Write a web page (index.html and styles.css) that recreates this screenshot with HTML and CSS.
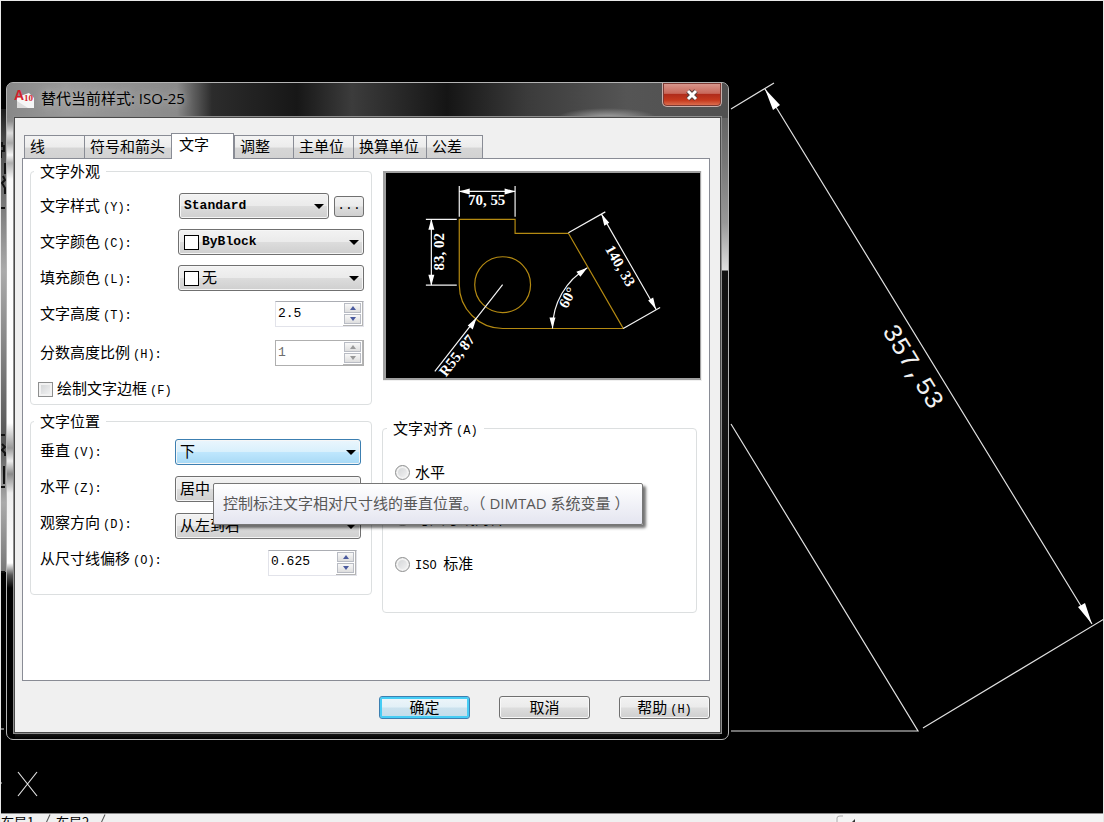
FILE: index.html
```html
<!DOCTYPE html>
<html lang="zh-CN">
<head>
<meta charset="utf-8">
<title>替代当前样式: ISO-25</title>
<link rel="stylesheet" href="styles.css">
</head>
<body>
<main class="desktop">
  <svg class="canvas" width="1104" height="822" viewBox="0 0 1104 822" aria-hidden="true">
    <defs>
      <linearGradient id="strip" x1="0" x2="0" y1="0" y2="1">
        <stop offset="0" stop-color="#1c1c1c"/><stop offset=".06" stop-color="#444"/>
        <stop offset=".15" stop-color="#666"/><stop offset=".35" stop-color="#aaa"/>
        <stop offset=".5" stop-color="#888"/><stop offset=".72" stop-color="#555"/>
        <stop offset=".85" stop-color="#aaa"/><stop offset="1" stop-color="#777"/>
      </linearGradient>
    </defs>
    <rect x="1" y="109" width="5" height="463" fill="url(#strip)"/>
    <path d="M2 142v4h2v5H1v7M5 163v11M3 176l2 4-3 3 3 5v6M1 208h4M1 435h4M2 444l3 3-3 3 3 3v3M4 466v18M1 487h4M1 572h4" fill="none" stroke="#111" stroke-width="2"/>
    <g fill="none" stroke="#e0e0e0" stroke-width="1.2">
      <path d="M731 109L774 83M765 89L1092 624M923 728L1104 619M731 424L918 731H731M0 729h4M18 772L37 796M37 772L18 796M1 783h1"/>
    </g>
    <path fill="#fff" d="M765 89l15 16-7 5zM1092 624l-14-17 7-4z"/>
    <text class="big-dim" x="912" y="367" text-anchor="middle" dominant-baseline="central" transform="rotate(58.6 912 367)">357,53</text>
  </svg>

  <nav class="layout-tabs" aria-label="布局">
    <a href="#l1">布局1</a><i></i><a href="#l2">布局2</a><i></i>
    <svg class="scroll-corner" width="268" height="9" viewBox="0 0 268 9"><path d="M0 0H268V9H0z" fill="#f4f4f4"/><path d="M2 9V4q0-2 3-2h3" fill="none" stroke="#aaa"/><path d="M16 9l4-4v4z" fill="#333"/></svg>
  </nav>

  <section class="dialog" role="dialog" aria-labelledby="title">
    <header class="titlebar">
      <svg class="app-icon" width="22" height="22" viewBox="0 0 22 22" aria-hidden="true">
        <path d="M3 9L15 5l5 5v10H3z" fill="#f6f6f6"/><path d="M3 20V13L14 20z" fill="#ddd"/>
        <text class="icon-a" x="0" y="12">A</text><text class="icon-n" x="10" y="13">10</text>
      </svg>
      <h1 id="title">替代当前样式: ISO-25</h1>
      <button class="close" aria-label="关闭"><svg width="14" height="12" viewBox="0 0 14 12"><path d="M3 2l8 8M11 2l-8 8" stroke="#55403e" stroke-width="5"/><path d="M3 2l8 8M11 2l-8 8" stroke="#fff" stroke-width="3"/></svg></button>
    </header>

    <div class="body">
      <div class="tabs" role="tablist">
        <button role="tab" class="tab tab-line">线</button>
        <button role="tab" class="tab tab-symbols">符号和箭头</button>
        <button role="tab" class="tab tab-text active" aria-selected="true">文字</button>
        <button role="tab" class="tab tab-fit">调整</button>
        <button role="tab" class="tab tab-primary">主单位</button>
        <button role="tab" class="tab tab-alt">换算单位</button>
        <button role="tab" class="tab tab-tol">公差</button>
      </div>

      <div class="panel" role="tabpanel">
        <div class="column">
          <fieldset class="group appearance">
            <legend>文字外观</legend>
            <div class="row"><label for="style">文字样式<span class="key">(Y):</span></label>
              <span class="pick pick-style"><select id="style" class="latin"><option>Standard</option></select></span>
              <button class="more">...</button></div>
            <div class="row"><label for="color">文字颜色<span class="key">(C):</span></label>
              <span class="pick swatch"><select id="color" class="latin"><option>ByBlock</option></select></span></div>
            <div class="row"><label for="fill">填充颜色<span class="key">(L):</span></label>
              <span class="pick swatch"><select id="fill"><option>无</option></select></span></div>
            <div class="row"><label for="height">文字高度<span class="key">(T):</span></label>
              <span class="spin"><input id="height" type="text" value="2.5"><span class="steps"><button class="up" aria-label="增加"></button><button class="down" aria-label="减少"></button></span></span></div>
            <div class="row row-tall"><label for="frac">分数高度比例<span class="key">(H):</span></label>
              <span class="spin off"><input id="frac" type="text" value="1" disabled><span class="steps"><button class="up" aria-label="增加" disabled></button><button class="down" aria-label="减少" disabled></button></span></span></div>
            <div class="row row-check"><input id="frame" type="checkbox"><label for="frame">绘制文字边框<span class="key">(F)</span></label></div>
          </fieldset>

          <fieldset class="group placement">
            <legend>文字位置</legend>
            <div class="labels">
              <label for="vert">垂直<span class="key">(V):</span></label>
              <label for="horiz">水平<span class="key">(Z):</span></label>
              <label for="view">观察方向<span class="key">(D):</span></label>
              <label for="offset">从尺寸线偏移<span class="key">(O):</span></label>
            </div>
            <div class="controls">
              <div><span class="pick hot"><select id="vert"><option>下</option></select></span></div>
              <div><span class="pick"><select id="horiz"><option>居中</option></select></span></div>
              <div><span class="pick"><select id="view"><option>从左到右</option></select></span></div>
              <div class="offset"><span class="spin"><input id="offset" type="text" value="0.625"><span class="steps"><button class="up" aria-label="增加"></button><button class="down" aria-label="减少"></button></span></span></div>
            </div>
          </fieldset>
        </div>

        <div class="column column-right">
          <div class="preview">
            <svg viewBox="386 174 315 206" role="img" aria-label="标注预览">
              <g fill="none" stroke="#b48a12" stroke-width="1.2">
                <path d="M459.500 286V220.500H515.500V234.500H569L624 330H503A44 44 0 0 1 459.500 286"/>
                <circle cx="503" cy="286" r="28"/>
              </g>
              <g fill="none" stroke="#f4f4f4" stroke-width="1.2">
                <path d="M459.500 187V218M515.500 187V218M459 192.500H516M426 220.500H457M426 286.500H457M431.500 220V286M569 234L606 213M624 330L661 309M602 215L657 311M503 286L435 373M553 330A71 71 0 0 1 588 269"/>
              </g>
              <path fill="#fff" d="M459 192.500l11-3v6zM516 192.500l-11-3v6zM431.500 220l-3 11h6zM431.500 287l-3-11h6zM602 215l3 12 5-3zM657 311l-8-9 5-3zM477 319l-9 8 5 4zM553 330l-3-11h6zM588 269l-11 4 4 5z"/>
              <g class="dims" text-anchor="middle" dominant-baseline="central">
                <text x="487" y="201">70, 55</text>
                <text x="439" y="253" transform="rotate(-90 439 253)">83, 02</text>
                <text x="621" y="267" transform="rotate(60 621 267)">140, 33</text>
                <text x="568" y="299" transform="rotate(-62 568 299)">60°</text>
                <text x="457" y="357" transform="rotate(-52 457 357)">R55, 87</text>
              </g>
            </svg>
          </div>

          <fieldset class="group align">
            <legend>文字对齐<span class="key">(A)</span></legend>
            <label><input type="radio" name="align">水平</label>
            <label><input type="radio" name="align">与尺寸线对齐</label>
            <label><input type="radio" name="align"><span><span class="key">ISO</span>&nbsp; 标准</span></label>
          </fieldset>
        </div>
      </div>

      <footer class="actions">
        <button class="default">确定</button>
        <button>取消</button>
        <button>帮助<span class="key">(H)</span></button>
      </footer>
    </div>

    <div class="tooltip" role="tooltip">控制标注文字相对尺寸线的垂直位置。（ DIMTAD 系统变量 ）</div>
  </section>
</main>
</body>
</html>
```

FILE: styles.css
```css
* { box-sizing: border-box; }

body {
  margin: 0;
  background: #000;
  font: 15px/20px "Noto Sans CJK SC", sans-serif;
  color: #000;
}

button, input, select { font: inherit; color: inherit; margin: 0; }

.desktop {
  position: relative;
  min-height: 100vh;
  overflow: hidden;
  border: 1px solid #e8e8e8;
  border-bottom: 0;
  background: #000;
}

.canvas { position: absolute; left: -1px; top: -1px; }

.big-dim { font: 26px "Liberation Mono", monospace; fill: #f2f2f2; }

/* Layout strip along the bottom edge */
.layout-tabs {
  position: absolute;
  left: 0;
  right: 0;
  bottom: 0;
  height: 9px;
  display: flex;
  gap: 8px;
  overflow: hidden;
  background: #f0f0f0;
  border-top: 1px solid #8c8c8c;
  font-size: 13px;
  line-height: 16px;
}
.layout-tabs a { color: #000; text-decoration: none; width: 38px; }
.layout-tabs i { width: 1px; height: 12px; background: #555; transform: rotate(25deg); }
.scroll-corner { margin-left: auto; flex: none; }

/* Dialog window */
.dialog {
  position: absolute;
  left: 5px;
  top: 81px;
  width: 723px;
  max-width: calc(100% - 10px);
  padding: 0 8px 7px;
  border: 1px solid #b4b4b4;
  border-radius: 7px;
  background:
    linear-gradient(#868686 0, #8c8c8c 38px, #ddd 50px, #aaa 60px, #f6f6f6 72px, #b0b0b0 80px, #fafafa 96px, #fff 340px, #999 365px, #eee 378px, #8a8a8a 391px, #eee 410px, #fff 480px, #555 492px, #000 505px) left / 8px 100% no-repeat,
    linear-gradient(#555 0, #777 80px, #999 140px, #e0e0e0 187px, #111 188px, #151515 330px, #000 100%) right / 8px 100% no-repeat,
    linear-gradient(#222, #000) bottom / 100% 8px no-repeat,
    #333;
}

.titlebar {
  display: flex;
  align-items: flex-start;
  gap: 5px;
  height: 35px;
  margin: 0 -8px;
  padding-left: 7px;
  border-radius: 6px 6px 0 0;
  background:
    radial-gradient(ellipse 50px 10px at 600px 35px, #aaa, transparent),
    linear-gradient(90deg, #888 0, #999 60px, #8a8a8a 170px, #2c2c2c 205px, #171717 290px, #3c3c3c 345px, #151515 440px, #3b3b3b 520px, #555 620px, #505050 100%);
}
.app-icon { margin-top: 5px; }
.icon-a { font: bold 14px "Liberation Sans", sans-serif; fill: #d4212b; }
.icon-n { font: bold 9px "Liberation Serif", serif; fill: #d4212b; }
.titlebar h1 {
  margin: 5px 0 0;
  font: 15px/20px "Open Sans", "Noto Sans CJK SC", sans-serif;
  text-shadow: 0 0 8px #ccc;
}
.close {
  display: grid;
  place-items: center;
  width: 60px;
  height: 24px;
  margin: 0 6px 0 auto;
  padding: 0;
  border: 1px solid #c9b0ac;
  border-top: 0;
  border-radius: 0 0 5px 5px;
  background: linear-gradient(#d99a90 0, #c8685a 45%, #b02c1a 50%, #c63a1e 75%, #e07858);
  box-shadow: inset 0 0 0 1px #7c3a33;
}

.body {
  padding: 15px 10px 13px 7px;
  background: #f0f0f0;
  box-shadow: 0 0 0 1px #4a4a4a, 0 0 0 2px #8e8e8e;
}

.tabs { display: flex; align-items: flex-end; height: 25px; padding-left: 2px; }
.tab {
  height: 23px;
  padding: 0 5px 2px;
  border: 1px solid #898c95;
  border-bottom: 0;
  border-right-width: 0;
  background: linear-gradient(#f4f4f4, #ececec 50%, #d6d6d6 55%, #d2d2d2);
  text-align: left;
  white-space: nowrap;
  line-height: 20px;
}
.tab-line { width: 60px; }
.tab-symbols { width: 87px; }
.tab-text { width: 63px; }
.tab-fit { width: 59px; }
.tab-primary { width: 60px; }
.tab-alt { width: 73px; }
.tab-tol { width: 57px; border-right-width: 1px; }
.tab.active {
  height: 26px;
  margin-bottom: -1px;
  padding: 0 7px 5px;
  border-right-width: 1px;
  background: #fff;
  z-index: 1;
}

.panel {
  display: grid;
  grid-template-columns: 342px 1fr;
  align-items: start;
  gap: 11px;
  min-height: 523px;
  padding: 2px 7px;
  border: 1px solid #898c95;
  background: #fff;
}
.column { display: flex; flex-direction: column; }
.column-right { padding-top: 10px; }

.group {
  min-width: 0;
  margin: 0;
  border: 1px solid #dcdfe0;
  border-radius: 4px;
}
.group legend { margin-left: -6px; padding: 0 6px; height: 20px; }
.key { font: 12px/20px "Liberation Mono", monospace; margin-left: 3px; }

.appearance { padding: 7px 7px 0 9px; }
.row { display: flex; align-items: center; height: 36px; gap: 4px; }
.row label { margin-right: auto; }
.row-tall { height: 42px; }
.row-check { height: 30px; margin-left: -2px; }

.pick { position: relative; display: block; width: 186px; }
.pick select {
  display: block;
  width: 100%;
  height: 26px;
  padding: 0 20px 2px 4px;
  appearance: none;
  border: 1px solid #707070;
  border-radius: 3px;
  background: linear-gradient(#f2f2f2, #ebebeb 48%, #dcdcdc 52%, #cfcfcf);
  box-shadow: inset 0 0 0 1px #f6f6f6;
  outline: 0;
}
.pick::after {
  content: "";
  position: absolute;
  right: 5px;
  top: 11px;
  border: 5px solid transparent;
  border-top-color: #000;
  border-bottom: 0;
}
.pick-style { width: 150px; margin-right: 1px; }
.pick .latin { font: bold 13px "Liberation Mono", monospace; }
.swatch select { padding-left: 23px; }
.swatch::before {
  content: "";
  position: absolute;
  left: 6px;
  top: 6px;
  width: 13px;
  height: 13px;
  border: 1px solid #000;
  background: #fff;
}
.pick.hot select {
  border-color: #3c7fb1;
  background: linear-gradient(#eaf6fd, #d9f0fc 48%, #bee6fd 52%, #a7d9f5);
}
.more {
  width: 30px;
  height: 21px;
  padding: 0;
  border: 1px solid #707070;
  border-radius: 3px;
  background: linear-gradient(#f2f2f2, #ebebeb 48%, #dddddd 52%, #cfcfcf);
  font: 13px/14px "Liberation Mono", monospace;
}

.spin {
  display: flex;
  width: 89px;
  height: 26px;
  border: 1px solid #e2e3ea;
  border-top-color: #abadb3;
  background: #fff;
}
.spin input {
  flex: 1;
  min-width: 0;
  padding: 0 2px 2px;
  border: 0;
  outline: 0;
  background: none;
  font: 13px "Liberation Mono", monospace;
}
.spin.off { border-color: #afafaf; color: #6d6d6d; }
.steps { display: grid; gap: 1px; width: 20px; padding: 1px; border-right: 1px solid #b4b4b4; border-bottom: 1px solid #b4b4b4; }
.steps button {
  display: grid;
  place-items: center;
  padding: 0;
  border: 1px solid #b9bcc4;
  background: linear-gradient(#f8f8f8, #dedede);
}
.steps button::after { content: ""; border: 3px solid transparent; }
.steps .up::after { border-top: 0; border-bottom: 4px solid #4a5a9e; }
.steps .down::after { border-bottom: 0; border-top: 4px solid #4a5a9e; }
.steps .up:disabled::after { border-bottom-color: #999; }
.steps .down:disabled::after { border-top-color: #999; }

input[type="checkbox"], input[type="radio"] {
  appearance: none;
  flex: none;
  width: 15px;
  height: 15px;
  border: 1px solid #8e8f8f;
  background: linear-gradient(135deg, #cfd1d3, #f6f6f6);
  box-shadow: inset 0 0 0 2px #f2f2f2;
}
input[type="radio"] { border-radius: 50%; }

.placement {
  display: grid;
  grid-template-columns: 1fr 186px;
  margin-top: 6px;
  padding: 2px 10px 13px 9px;
}
.labels, .controls { display: grid; align-content: start; }
.labels { grid-auto-rows: 36px; align-items: center; }
.controls { grid-auto-rows: 37px; align-items: center; }
.offset { justify-self: end; padding-right: 4px; }

.preview {
  padding: 2px 1px 2px 3px;
  background: #a0a0a0;
  border-right: 1px solid #f0f0f0;
  border-bottom: 1px solid #f0f0f0;
}
.preview svg { display: block; width: 100%; background: #000; }
.dims { font: bold 15px "Liberation Serif", serif; fill: #fff; }

.align {
  display: grid;
  grid-auto-rows: 46px;
  align-items: center;
  margin: 37px 5px 0 -1px;
  padding: 11px 12px 25px;
}
.align legend { margin-left: -8px; }
.align label { display: flex; align-items: center; gap: 5px; }
.align label .key { margin-left: 0; }

.actions { display: flex; justify-content: flex-end; gap: 29px; margin-top: 15px; }
.actions button {
  width: 91px;
  height: 23px;
  padding: 0 0 2px;
  border: 1px solid #707070;
  border-radius: 3px;
  background: linear-gradient(#f2f2f2, #ebebeb 48%, #dddddd 52%, #cfcfcf);
  box-shadow: inset 0 0 0 1px #f8f8f8;
  line-height: 20px;
}
.actions .default {
  border-color: #3c7fb1;
  background: linear-gradient(#eef6fa, #e2f0f7 48%, #cbe2ee 52%, #c2dcea);
  box-shadow: inset 0 0 0 2px #46cdf5;
}

.tooltip {
  position: absolute;
  left: 206px;
  top: 400px;
  padding: 9px 13px 11px 9px;
  border: 1px solid #767676;
  border-radius: 2px;
  background: linear-gradient(#fff, #e4e5f0);
  box-shadow: 3px 3px 3px rgba(0, 0, 0, .55);
  color: #575757;
  font: 15px/20px "Open Sans", "Noto Sans CJK SC", sans-serif;
  white-space: nowrap;
}
```
